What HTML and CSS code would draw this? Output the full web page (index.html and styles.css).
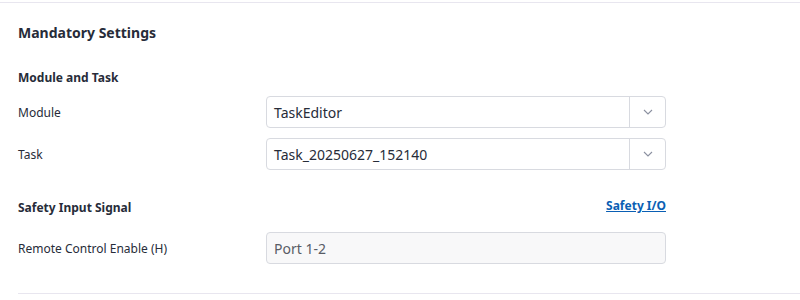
FILE: index.html
```html
<!DOCTYPE html>
<html>
<head>
<meta charset="utf-8">
<link rel="stylesheet" href="styles.css">
</head>
<body>
<div class="panel">
  <div class="section">
    <h2 class="title">Mandatory Settings</h2>
    <h3 class="subtitle">Module and Task</h3>
    <div class="rows">
      <div class="row">
        <span class="label">Module</span>
        <div class="select">
          <span class="value">TaskEditor</span>
          <span class="arrow"><svg width="10" height="6" viewBox="0 0 10 6"><path d="M1 1l4 4 4-4" fill="none" stroke="#8b90a0" stroke-width="1.1"/></svg></span>
        </div>
      </div>
      <div class="row">
        <span class="label">Task</span>
        <div class="select">
          <span class="value">Task_20250627_152140</span>
          <span class="arrow"><svg width="10" height="6" viewBox="0 0 10 6"><path d="M1 1l4 4 4-4" fill="none" stroke="#8b90a0" stroke-width="1.1"/></svg></span>
        </div>
      </div>
    </div>
    <div class="subhead">
      <h3 class="subtitle">Safety Input Signal</h3>
      <a class="link" href="#">Safety I/O</a>
    </div>
    <div class="row">
      <span class="label">Remote Control Enable (H)</span>
      <div class="input">Port 1-2</div>
    </div>
  </div>
  <div class="divider"></div>
</div>
</body>
</html>
```
FILE: styles.css
```css
* { box-sizing: border-box; }
html, body { margin: 0; padding: 0; background: #fff; }
body {
  font-family: "Noto Sans", "Open Sans", sans-serif;
  color: #272c39;
  padding-top: 2px;
}
.panel {
  border-top: 1px solid #e8e6ef;
}
.section {
  padding: 0 134px 0 18px;
}
.title {
  margin: 20px 0 0;
  font-size: 14px;
  line-height: 20px;
  font-weight: 700;
}
.subtitle {
  margin: 0;
  font-size: 12px;
  line-height: 18px;
  font-weight: 700;
}
.title + .subtitle { margin-top: 26px; }
.rows {
  margin-top: 9px;
  display: flex;
  flex-direction: column;
  gap: 10px;
}
.row {
  display: flex;
  align-items: center;
}
.label {
  width: 248px;
  font-size: 12px;
}
.select {
  flex: 1;
  height: 32px;
  border: 1px solid #d8dae0;
  border-radius: 4px;
  display: flex;
  align-items: stretch;
  background: #fff;
}
.value {
  flex: 1;
  padding-left: 7px;
  font-size: 14px;
  display: flex;
  align-items: center;
}
.arrow {
  width: 36px;
  border-left: 1px solid #d8dae0;
  display: flex;
  align-items: center;
  justify-content: center;
}
.subhead {
  margin-top: 29px;
  display: flex;
  justify-content: space-between;
  align-items: flex-start;
}
.link {
  font-size: 12px;
  line-height: 14px;
  font-weight: 700;
  color: #0a5fb4;
  text-decoration: underline;
}
.subhead + .row { margin-top: 15px; }
.input {
  flex: 1;
  height: 32px;
  border: 1px solid #d8dae0;
  border-radius: 4px;
  background: #f8f8f9;
  color: #585c66;
  font-size: 14px;
  padding-left: 7px;
  display: flex;
  align-items: center;
}
.divider {
  margin: 29px 0 0 18px;
  border-top: 1px solid #e8e6ef;
}
```
